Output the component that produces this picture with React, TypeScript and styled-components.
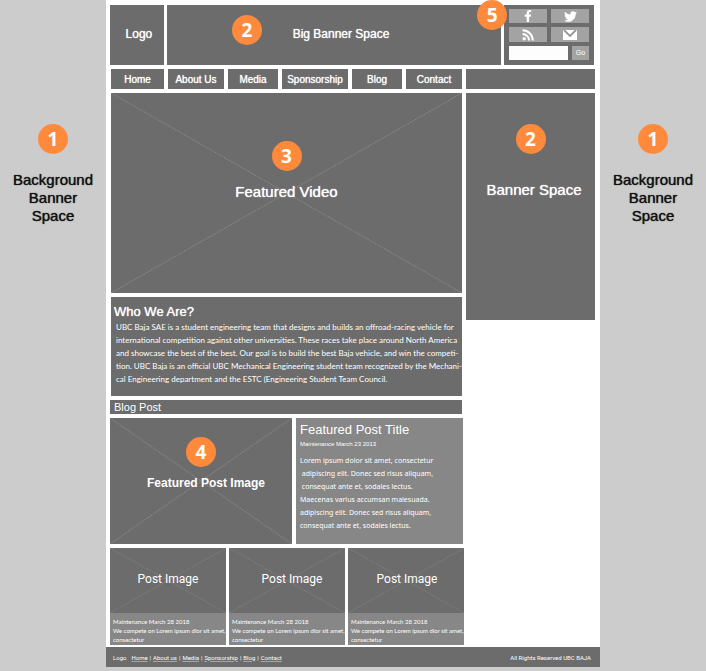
import React from "react";
import styled, { createGlobalStyle } from "styled-components";
import { FaFacebookF, FaTwitter } from "react-icons/fa";

const sans = '"Liberation Sans", Arial, sans-serif';
const humanist = '"Noto Sans", sans-serif';
const compact = "Roboto, sans-serif";
const narrow = "Lato, sans-serif";
const dark = "#6c6c6c";
const mid = "#878787";
const glow = "0 0 1px #ffffff";

const GlobalStyle = createGlobalStyle`
  * { box-sizing: border-box; }
  body { margin: 0; background: #cccccc; color: #ffffff; font-family: ${sans}; }
  h1, h2, h3, p { margin: 0; font-weight: 400; }
  a { color: inherit; text-decoration: none; }
`;

const Layout = styled.div`
  display: grid;
  grid-template-columns: 106fr 494fr 106fr;
  min-height: 100vh;
  padding-bottom: 4px;
`;

const Gutter = styled.aside`
  display: flex;
  flex-direction: column;
  align-items: center;
  gap: 17px;
  padding-top: 124px;
`;

const GutterLabel = styled.p`
  color: #111111;
  font-size: 15px;
  line-height: 18px;
  text-align: center;
  text-shadow: 0 0 1px #111111;
`;

const Page = styled.div`
  display: flex;
  flex-direction: column;
  min-width: 0;
  background: #ffffff;
`;

const Badge = styled.span`
  display: flex;
  flex: none;
  align-items: center;
  justify-content: center;
  width: 30px;
  height: 30px;
  border-radius: 50%;
  background: #ff8a3c;
  color: #ffffff;
  font: 700 19px/30px "Open Sans", sans-serif;
`;

const FloatingBadge = styled(Badge)<{ $left: string; $top: string }>`
  position: absolute;
  z-index: 1;
  left: ${(p) => p.$left};
  top: ${(p) => p.$top};
`;

const Label = styled.span<{ $size: number; $bold?: boolean; $family?: string; $indent?: number }>`
  position: relative;
  padding-left: ${(p) => p.$indent ?? 0}px;
  font-family: ${(p) => p.$family ?? sans};
  font-size: ${(p) => p.$size}px;
  font-weight: ${(p) => (p.$bold ? 700 : 400)};
  line-height: 18px;
  white-space: nowrap;
  text-shadow: ${(p) => (p.$bold || p.$family ? "none" : glow)};
`;

const Header = styled.header`
  display: grid;
  grid-template-columns: 54fr 335fr 90fr;
  gap: 3px;
  padding: 5px 6px 0 4px;
`;

const HeaderPanel = styled.div<{ $shift?: number }>`
  position: relative;
  display: flex;
  align-items: center;
  justify-content: center;
  min-height: 60px;
  padding: 0 0 3px ${(p) => p.$shift ?? 0}px;
  background: ${dark};
`;

const Tools = styled.div`
  position: relative;
  display: grid;
  grid-template-columns: 1fr 1fr;
  grid-template-rows: 14px 15px 14px;
  gap: 4px;
  padding: 4px 5px;
  background: ${dark};
`;

const Social = styled.a`
  display: flex;
  align-items: center;
  justify-content: center;
  background: #a3a3a3;
  color: #ffffff;
`;

const Search = styled.form`
  display: grid;
  grid-template-columns: 1fr 17px;
  grid-column: 1 / -1;
  gap: 4px;
`;

const SearchInput = styled.input`
  min-width: 0;
  width: 100%;
  padding: 0 3px;
  border: 0;
  border-radius: 0;
  background: #fdfdfd;
  font: 9px/14px ${sans};
`;

const GoButton = styled.button`
  padding: 0;
  border: 0;
  background: #a3a3a3;
  color: #ffffff;
  font: 7px/14px ${sans};
`;

const Nav = styled.nav`
  display: grid;
  grid-template-columns: 53fr 56fr 50fr 66fr 50fr 56fr 129fr;
  gap: 4px;
  padding: 4px 5px 0;
`;

const NavItem = styled.a`
  display: flex;
  align-items: center;
  justify-content: center;
  min-height: 20px;
  background: ${dark};
  font-size: 10px;
  text-shadow: ${glow};
  white-space: nowrap;
`;

const NavFill = styled.div`
  background: ${dark};
`;

const Body = styled.div`
  display: grid;
  grid-template-columns: 354fr 129fr;
  gap: 2px;
  align-items: start;
  padding: 4px 5px 2px 4px;
`;

const Main = styled.main`
  display: flex;
  flex-direction: column;
  gap: 4px;
  min-width: 0;
`;

const Intro = styled.div`
  display: flex;
  flex-direction: column;
  gap: 4px;
  padding: 0 2px 0 1px;
`;

const MediaPanel = styled.div<{ $height: number; $top: number; $gap: number }>`
  position: relative;
  display: flex;
  flex-direction: column;
  align-items: center;
  gap: ${(p) => p.$gap}px;
  min-height: ${(p) => p.$height}px;
  padding-top: ${(p) => p.$top}px;
  background: ${dark};
`;

const PanelBadge = styled(Badge)`
  position: relative;
`;

const Diagonals = styled.svg`
  position: absolute;
  inset: 0;
  width: 100%;
  height: 100%;
`;

const About = styled.section`
  min-height: 99px;
  padding: 5px 0 9px 3px;
  background: ${dark};
`;

const AboutTitle = styled.h1`
  font-size: 13px;
  line-height: 19px;
  text-shadow: ${glow};
`;

const AboutText = styled.p`
  padding-left: 2px;
  font: 8px/13px ${narrow};
  white-space: nowrap;
`;

const BlogBar = styled.h2`
  margin-right: 2px;
  padding-left: 4px;
  background: ${dark};
  font-size: 11px;
  line-height: 14px;
`;

const Featured = styled.section`
  display: grid;
  grid-template-columns: 182fr 167fr;
  gap: 4px;
  padding-right: 1px;
`;

const Story = styled.article`
  min-width: 0;
  padding: 4px 4px 0;
  background: ${mid};
`;

const StoryTitle = styled.h3`
  font-size: 13px;
  line-height: 16px;
  white-space: nowrap;
`;

const StoryMeta = styled.p`
  font: 6px/12px ${sans};
`;

const StoryText = styled.p`
  padding-top: 4px;
  font: 7px/13px ${humanist};
  white-space: pre;
`;

const Posts = styled.section`
  display: grid;
  grid-template-columns: repeat(3, 1fr);
  gap: 3px;
`;

const Post = styled.article`
  min-width: 0;
  background: ${mid};
`;

const Caption = styled.p`
  min-height: 32px;
  padding: 4px 0 1px 3px;
  font: 6px/9px ${narrow};
  white-space: nowrap;
`;

const Footer = styled.footer`
  display: flex;
  align-items: center;
  justify-content: space-between;
  min-height: 20px;
  margin-top: auto;
  padding: 0 9px 0 7px;
  background: ${dark};
  font: 6px/9px ${compact};
  white-space: nowrap;
`;

const FooterNav = styled.nav`
  display: flex;
  gap: 2px;
`;

const FooterLogo = styled.span`
  margin-right: 3px;
`;

const FooterLink = styled.a`
  text-decoration: underline #a5a5a5 1px;
  text-underline-offset: 1px;
`;

const Cross = ({ color = "#929292" }: { color?: string }) => (
  <Diagonals viewBox="0 0 100 100" preserveAspectRatio="none" aria-hidden="true">
    <path
      d="M0 0 100 100M0 100 100 0"
      fill="none"
      stroke={color}
      strokeDasharray="1 1"
      vectorEffect="non-scaling-stroke"
    />
  </Diagonals>
);

const RssIcon = () => (
  <svg width="12" height="12" viewBox="0 0 12 12" aria-hidden="true">
    <circle cx="2.2" cy="9.8" r="1.7" fill="#fff" />
    <path d="M.5 5A6.5 6.5 0 0 1 7 11.5M.5 1.2A10.3 10.3 0 0 1 10.8 11.5" fill="none" stroke="#fff" strokeWidth="2" />
  </svg>
);

const MailIcon = () => (
  <svg width="14" height="10" viewBox="0 0 14 10" aria-hidden="true">
    <path d="M0 0H14V10H0Z" fill="#fff" />
    <path d="M1 0 7 6 13 0" fill="none" stroke="#959595" strokeWidth="1.8" />
  </svg>
);

const Side = ({ children }: { children: React.ReactNode }) => (
  <Gutter>
    <Badge>{children}</Badge>
    <GutterLabel>
      Background
      <br />
      Banner
      <br />
      Space
    </GutterLabel>
  </Gutter>
);

const navItems = ["Home", "About Us", "Media", "Sponsorship", "Blog", "Contact"];
const footerItems = ["Home", "About us", "Media", "Sponsorship", "Blog", "Contact"];
const posts = [
  { id: 1, indent: 0 },
  { id: 2, indent: 10 },
  { id: 3, indent: 2 },
];

export default function App() {
  return (
    <>
      <GlobalStyle />
      <Layout>
        <Side>1</Side>
        <Page>
          <Header>
            <HeaderPanel $shift={4}>
              <Label $size={12}>Logo</Label>
            </HeaderPanel>
            <HeaderPanel $shift={14}>
              <FloatingBadge $left="65px" $top="10px">2</FloatingBadge>
              <Label $size={12}>Big Banner Space</Label>
            </HeaderPanel>
            <Tools>
              <FloatingBadge $left="-27px" $top="-5px">5</FloatingBadge>
              <Social href="#facebook" aria-label="Facebook"><FaFacebookF size={12} /></Social>
              <Social href="#twitter" aria-label="Twitter"><FaTwitter size={13} /></Social>
              <Social href="#rss" aria-label="RSS"><RssIcon /></Social>
              <Social href="#mail" aria-label="Email"><MailIcon /></Social>
              <Search onSubmit={(e) => e.preventDefault()}>
                <SearchInput type="text" aria-label="Search" />
                <GoButton type="submit">Go</GoButton>
              </Search>
            </Tools>
          </Header>
          <Nav>
            {navItems.map((item) => (
              <NavItem key={item} href="#">{item}</NavItem>
            ))}
            <NavFill />
          </Nav>
          <Body>
            <Main>
              <Intro>
                <MediaPanel $height={200} $top={48} $gap={12}>
                  <Cross />
                  <PanelBadge>3</PanelBadge>
                  <Label $size={15}>Featured Video</Label>
                </MediaPanel>
                <About>
                  <AboutTitle>Who We Are?</AboutTitle>
                  <AboutText>
                    UBC Baja SAE is a student engineering team that designs and builds an offroad-racing vehicle for
                    <br />
                    international competition against other universities. These races take place around North America
                    <br />
                    and showcase the best of the best. Our goal is to build the best Baja vehicle, and win the competi-
                    <br />
                    tion. UBC Baja is an official UBC Mechanical Engineering student team recognized by the Mechani-
                    <br />
                    cal Engineering department and the ESTC (Engineering Student Team Council.
                  </AboutText>
                </About>
              </Intro>
              <BlogBar>Blog Post</BlogBar>
              <Featured>
                <MediaPanel $height={126} $top={19} $gap={7}>
                  <Cross color="#8c8c8c" />
                  <PanelBadge>4</PanelBadge>
                  <Label $size={12} $bold $indent={10}>Featured Post Image</Label>
                </MediaPanel>
                <Story>
                  <StoryTitle>Featured Post Title</StoryTitle>
                  <StoryMeta>Maintenance March 23 2013</StoryMeta>
                  <StoryText>
                    {"Lorem ipsum dolor sit amet, consectetur\n adipiscing elit. Donec sed risus aliquam,\n consequat ante et, sodales lectus.\nMaecenas varius accumsan malesuada.\nadipiscing elit. Donec sed risus aliquam,\nconsequat ante et, sodales lectus."}
                  </StoryText>
                </Story>
              </Featured>
              <Posts>
                {posts.map((post) => (
                  <Post key={post.id}>
                    <MediaPanel $height={65} $top={22} $gap={0}>
                      <Cross color="#848484" />
                      <Label $size={12} $family={compact} $indent={post.indent}>Post Image</Label>
                    </MediaPanel>
                    <Caption>
                      Maintenance March 28 2018
                      <br />
                      We compete on Lorem ipsum dlor sit amet,
                      <br />
                      consectetur
                    </Caption>
                  </Post>
                ))}
              </Posts>
            </Main>
            <MediaPanel as="aside" $height={227} $top={31} $gap={27}>
              <Badge>2</Badge>
              <Label $size={15} $indent={7}>Banner Space</Label>
            </MediaPanel>
          </Body>
          <Footer>
            <FooterNav>
              <FooterLogo>Logo</FooterLogo>
              {footerItems.map((item, i) => (
                <React.Fragment key={item}>
                  {i > 0 && <span>|</span>}
                  <FooterLink href="#">{item}</FooterLink>
                </React.Fragment>
              ))}
            </FooterNav>
            <span>All Rights Reserved UBC BAJA</span>
          </Footer>
        </Page>
        <Side>1</Side>
      </Layout>
    </>
  );
}
